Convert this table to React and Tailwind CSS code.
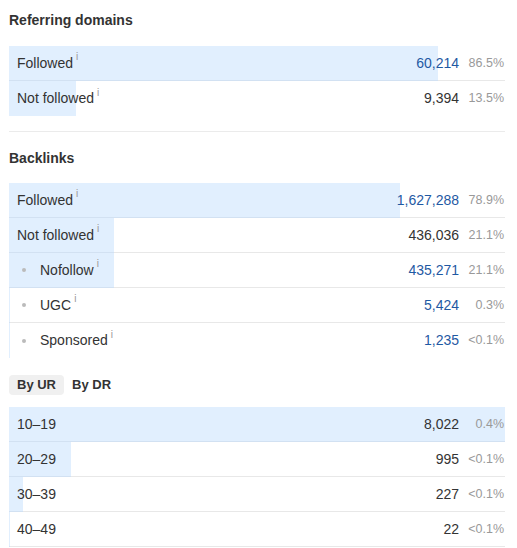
import React from 'react'

const referring = [
  { label: 'Followed', value: '60,214', pct: '86.5%', bar: 86.5, link: true, info: true },
  { label: 'Not followed', value: '9,394', pct: '13.5%', bar: 13.5, link: false, info: true },
]

const backlinks = [
  { label: 'Followed', value: '1,627,288', pct: '78.9%', bar: 78.9, link: true, info: true },
  { label: 'Not followed', value: '436,036', pct: '21.1%', bar: 21.1, link: false, info: true },
  { label: 'Nofollow', value: '435,271', pct: '21.1%', bar: 21.1, link: true, info: true, sub: true },
  { label: 'UGC', value: '5,424', pct: '0.3%', bar: 0.3, link: true, info: true, sub: true },
  { label: 'Sponsored', value: '1,235', pct: '<0.1%', bar: 0.2, link: true, info: true, sub: true },
]

const byUr = [
  { label: '10–19', value: '8,022', pct: '0.4%', bar: 100 },
  { label: '20–29', value: '995', pct: '<0.1%', bar: 12.4 },
  { label: '30–39', value: '227', pct: '<0.1%', bar: 2.8 },
  { label: '40–49', value: '22', pct: '<0.1%', bar: 0.3 },
]

function Row({ row, last }) {
  return (
    <div className={`relative h-[35px] flex items-center ${last ? '' : 'border-b border-[#e8e8e8]'}`}>
      {/* bar width comes from the data */}
      <div
        className={`absolute left-0 top-0 bg-[#e1effe] ${last ? 'bottom-0' : '-bottom-px border-b border-[#d2e1f2]'}`}
        style={{ width: `${row.bar}%`, minWidth: '1px' }}
      />
      <div className={`relative flex-1 flex items-center ${row.sub ? 'pl-[13px]' : 'pl-2'}`}>
        {row.sub && <span className="w-[4px] h-[4px] rounded-full bg-[#bbbbbb] mr-[14px]" />}
        <span>{row.label}</span>
        {row.info && <sup className="text-[10px] text-[#999] ml-[3px] -top-[6px]">i</sup>}
      </div>
      <span className={`relative text-right ${row.link ? 'text-[#1f59a3]' : 'text-[#333]'}`}>{row.value}</span>
      <span className="relative w-[46px] text-right pr-px text-[12.5px] text-[#999]">{row.pct}</span>
    </div>
  )
}

function Table({ rows, lastBorder }) {
  return (
    <div>
      {rows.map((r, i) => (
        <Row key={i} row={r} last={!lastBorder && i === rows.length - 1} />
      ))}
    </div>
  )
}

export default function App() {
  return (
    <div className="bg-white min-h-[548px] pl-[9px] pr-[12px] pt-[10px] font-['Liberation_Sans',Arial,sans-serif] text-[14px] text-[#333]">
      <h2 className="font-bold leading-5 h-5">Referring domains</h2>
      <div className="mt-4">
        <Table rows={referring} />
      </div>

      <div className="mt-[15px] border-t border-[#ebebeb]" />

      <h2 className="mt-[16px] font-bold leading-5 h-5">Backlinks</h2>
      <div className="mt-[15px]">
        <Table rows={backlinks} />
      </div>

      <div className="mt-[17px] flex text-[13px] font-bold">
        <span className="h-5 leading-5 px-2 bg-[#f0f0f0] rounded-sm">By UR</span>
        <span className="h-5 leading-5 px-2">By DR</span>
      </div>

      <div className="mt-[12px]">
        <Table rows={byUr} lastBorder />
      </div>
    </div>
  )
}
